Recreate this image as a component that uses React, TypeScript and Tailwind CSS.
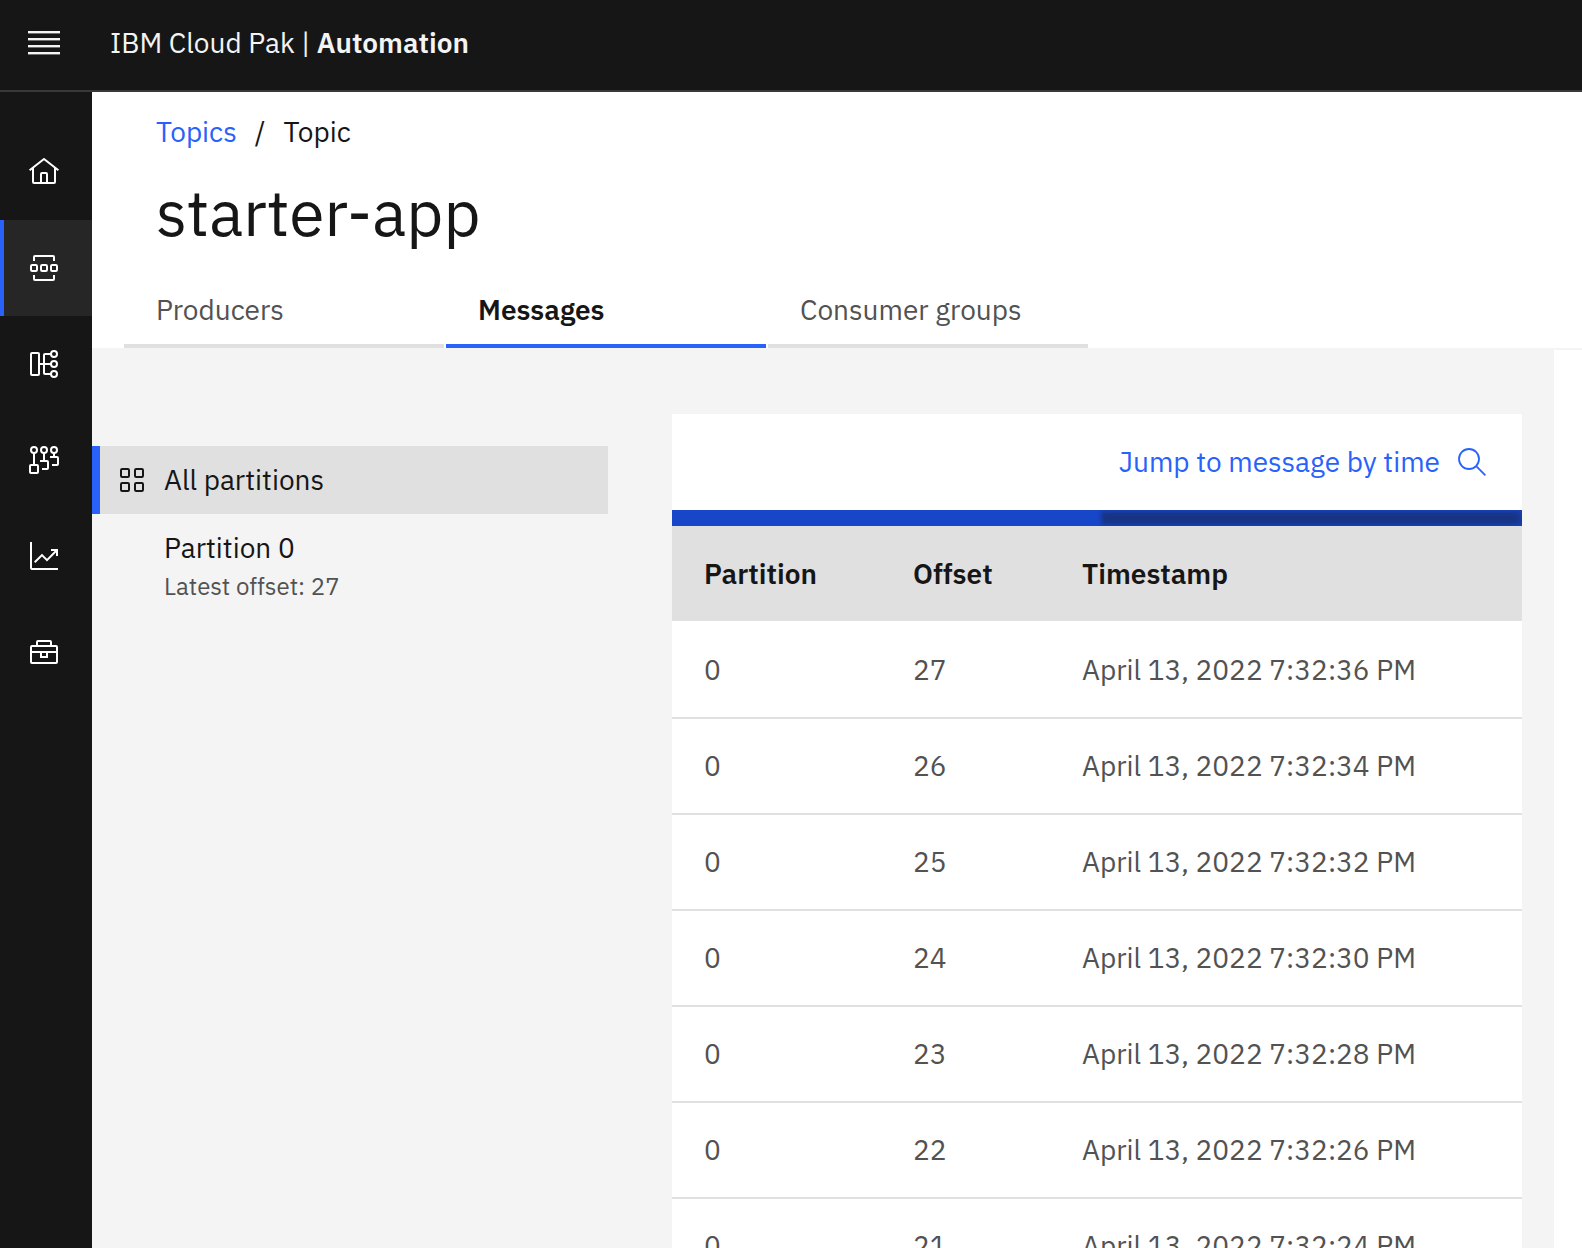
import type { ReactNode } from "react";

function Icon({ children }: { children: ReactNode }) {
  return (
    <svg viewBox="0 0 32 32" className="size-8" fill="none" stroke="currentColor" strokeWidth="2" strokeLinejoin="round" aria-hidden="true">
      {children}
    </svg>
  );
}

const navItems = [
  {
    label: "Home",
    active: false,
    icon: (
      <Icon>
        <path d="M1.6 14.2 16 3l14.4 11.2M5 12v14a1 1 0 0 0 1 1h20a1 1 0 0 0 1-1V12M13 27v-9a1 1 0 0 1 1-1h4a1 1 0 0 1 1 1v9" />
      </Icon>
    ),
  },
  {
    label: "Topics",
    active: true,
    icon: (
      <Icon>
        <path d="M6 9V5a1 1 0 0 1 1-1h18a1 1 0 0 1 1 1v4M6 23v4a1 1 0 0 0 1 1h18a1 1 0 0 0 1-1v-4" />
        <rect x="3" y="13" width="6" height="6" rx="1.2" />
        <rect x="13" y="13" width="6" height="6" rx="1.2" />
        <rect x="23" y="13" width="6" height="6" rx="1.2" />
      </Icon>
    ),
  },
  {
    label: "Schema registry",
    active: false,
    icon: (
      <Icon>
        <rect x="3" y="5" width="8" height="22" rx="1" />
        <path d="M11 16h12M23 6h-6a1 1 0 0 0-1 1v18a1 1 0 0 0 1 1h6" />
        <circle cx="26" cy="6" r="3" />
        <circle cx="26" cy="16" r="3" />
        <circle cx="26" cy="26" r="3" />
      </Icon>
    ),
  },
  {
    label: "Toolbox",
    active: false,
    icon: (
      <Icon>
        <circle cx="6" cy="6" r="3" />
        <circle cx="16" cy="6" r="3" />
        <circle cx="26" cy="6" r="3" />
        <rect x="2" y="21" width="8" height="8" rx="1" />
        <path d="M6 9v12M16 9v8M12 17h7a1 1 0 0 1 1 1v6a1 1 0 0 1-1 1h-5M26 9v4M22 13h7a1 1 0 0 1 1 1v6a1 1 0 0 1-1 1h-5" />
      </Icon>
    ),
  },
  {
    label: "Monitoring",
    active: false,
    icon: (
      <Icon>
        <path d="M3 2v26a1 1 0 0 0 1 1h26" />
        <path strokeLinejoin="miter" d="m6.7 22.3 7.3-7.2 5 5L29 10M23 10h6v6" />
      </Icon>
    ),
  },
  {
    label: "Administration",
    active: false,
    icon: (
      <Icon>
        <rect x="3" y="10" width="26" height="17" rx="1" />
        <path d="M9 10V6a1 1 0 0 1 1-1h12a1 1 0 0 1 1 1v4M3 16h26" />
        <path strokeLinejoin="miter" d="M13 16v5h6v-5" />
      </Icon>
    ),
  },
];

const tabs = [
  { label: "Producers", active: false },
  { label: "Messages", active: true },
  { label: "Consumer groups", active: false },
];

const messages = [27, 26, 25, 24, 23, 22, 21].map((offset, i) => ({
  partition: 0,
  offset,
  time: `April 13, 2022 7:32:${36 - i * 2} PM`,
}));

function TopBar() {
  return (
    <header className="flex h-[92px] shrink-0 items-center border-b-2 border-[#393939] bg-[#161616] pb-1 text-[#f4f4f4]">
      <button type="button" aria-label="Open menu" className="flex h-full w-[92px] items-center pl-7">
        <svg viewBox="0 0 32 32" className="size-8" fill="currentColor" aria-hidden="true">
          <rect y="4" width="32" height="2.4" />
          <rect y="11" width="32" height="2.4" />
          <rect y="18" width="32" height="2.4" />
          <rect y="25" width="32" height="2.4" />
        </svg>
      </button>
      <p className="ml-[18px] text-[28px] leading-9">
        IBM Cloud Pak | <span className="font-semibold">Automation</span>
      </p>
    </header>
  );
}

function SideNav() {
  return (
    <nav aria-label="Main" className="w-[92px] shrink-0 bg-[#161616] pt-8 text-white">
      <ul>
        {navItems.map((item) => (
          <li key={item.label}>
            <a
              href="#"
              aria-label={item.label}
              aria-current={item.active ? "page" : undefined}
              className={
                item.active
                  ? "flex h-24 items-center border-l-4 border-[#2962fb] bg-[#262626] pl-6"
                  : "flex h-24 items-center pl-7"
              }
            >
              {item.icon}
            </a>
          </li>
        ))}
      </ul>
    </nav>
  );
}

function PageHeader() {
  return (
    <div className="shrink-0 border-b-2 border-[#f4f4f4] bg-white">
      <nav aria-label="Breadcrumb" className="px-16 pt-[22px] text-[28px] leading-9">
        <ol className="flex gap-[18px]">
          <li>
            <a href="#" className="text-[#2962fb]">Topics</a>
          </li>
          <li aria-hidden="true">/</li>
          <li aria-current="page">Topic</li>
        </ol>
      </nav>
      <h1 className="mt-[22px] px-16 text-[64px] leading-20">starter-app</h1>
      <div role="tablist" className="flex gap-0.5 px-8 pt-4">
        {tabs.map((tab) => (
          <button
            key={tab.label}
            type="button"
            role="tab"
            aria-selected={tab.active}
            className={
              tab.active
                ? "h-20 w-80 border-b-4 border-[#2962fb] px-8 pt-2 text-left text-[28px] leading-9 font-semibold"
                : "h-20 w-80 border-b-4 border-[#e0e0e0] px-8 pt-2 text-left text-[28px] leading-9 text-[#525252]"
            }
          >
            {tab.label}
          </button>
        ))}
      </div>
    </div>
  );
}

function PartitionList() {
  return (
    <div className="w-[516px] shrink-0 pt-8 text-[28px] leading-9">
      <button
        type="button"
        className="flex h-[68px] w-full items-center gap-4 border-l-8 border-[#2962fb] bg-[#e0e0e0] pl-4"
      >
        <Icon>
          <rect x="5" y="5" width="8" height="8" rx="1.2" />
          <rect x="19" y="5" width="8" height="8" rx="1.2" />
          <rect x="5" y="19" width="8" height="8" rx="1.2" />
          <rect x="19" y="19" width="8" height="8" rx="1.2" />
        </Icon>
        All partitions
      </button>
      <button type="button" className="block w-full pt-4 pl-[72px] text-left">
        <span className="block">Partition 0</span>
        <span className="block pt-1 text-2xl text-[#525252]">Latest offset: 27</span>
      </button>
    </div>
  );
}

function MessageTable() {
  return (
    <section aria-label="Messages" className="min-w-0 flex-1">
      <div className="flex h-24 items-center justify-end bg-white pr-[34px] pl-8">
        <button type="button" className="flex items-center gap-4 text-[28px] leading-9 text-[#2962fb]">
          Jump to message by time
          <svg viewBox="0 0 32 32" className="size-8" fill="none" stroke="currentColor" strokeWidth="1.8" aria-hidden="true">
            <circle cx="13" cy="13" r="10" />
            <path d="m20.2 20.2 9.2 9.2" />
          </svg>
        </button>
      </div>
      <div className="flex h-4 justify-end overflow-hidden bg-[#1746c8]">
        <div className="w-1/2 bg-[#193380] shadow-[inset_0_0_8px_#1746c8,inset_4px_0_4px_#1746c8]" />
      </div>
      <table className="w-full table-fixed bg-white text-left text-[28px] leading-9">
        <thead>
          <tr className="h-24 border-b-2 border-white bg-[#e0e0e0]">
            <th scope="col" className="w-[209px] pl-8 font-semibold">Partition</th>
            <th scope="col" className="w-[169px] pl-8 font-semibold">Offset</th>
            <th scope="col" className="pl-8 font-semibold">Timestamp</th>
          </tr>
        </thead>
        <tbody className="text-[#525252]">
          {messages.map((message) => (
            <tr key={message.offset} className="h-24 border-b-2 border-[#e0e0e0]">
              <td className="pl-8">{message.partition}</td>
              <td className="pl-8">{message.offset}</td>
              <td className="pl-8 whitespace-nowrap">{message.time}</td>
            </tr>
          ))}
        </tbody>
      </table>
    </section>
  );
}

export default function App() {
  return (
    <div className="flex h-screen flex-col overflow-hidden bg-white font-['IBM_Plex_Sans','Noto_Sans',sans-serif] text-[#161616]">
      <TopBar />
      <div className="flex min-h-0 flex-1">
        <SideNav />
        <main className="flex min-w-0 flex-1 flex-col">
          <PageHeader />
          <div className="mr-7 flex min-h-0 flex-1 items-start gap-16 overflow-hidden bg-[#f4f4f4] pt-16 pr-8">
            <PartitionList />
            <MessageTable />
          </div>
        </main>
      </div>
    </div>
  );
}
